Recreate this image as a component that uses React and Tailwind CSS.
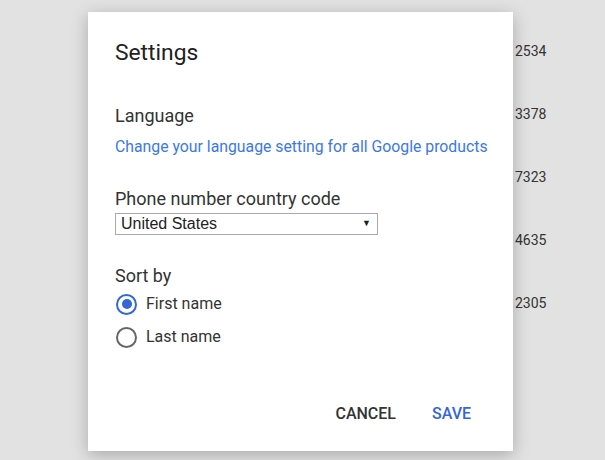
import React from "react";

export default function App() {
  const nums = ["2534", "3378", "7323", "4635", "2305"];
  return (
    <div className="relative w-[605px] h-[460px] overflow-hidden bg-[#e2e2e2]" style={{ fontFamily: "Roboto, 'Liberation Sans', sans-serif" }}>
      <div className="flex flex-col pl-[515px] pt-[41px] gap-[43px] text-[14px] leading-[20px] text-[#333]">
        {nums.map((n) => (
          <div key={n}>{n}</div>
        ))}
      </div>
      <div className="absolute left-[88px] top-[12px] w-[425px] h-[439px] bg-white shadow-[0_4px_16px_rgba(0,0,0,0.25)] flex flex-col pl-[27px]">
        <div className="mt-[29px] text-[22.8px] leading-[24px] text-[#212121]">Settings</div>
        <div className="mt-[41px] text-[18px] leading-[20px] text-[#333]">Language</div>
        <div className="mt-[11px] text-[15.8px] leading-[20px] text-[#3b78e7]">Change your language setting for all Google products</div>
        <div className="mt-[32px] text-[18px] leading-[20px] text-[#333]">Phone number country code</div>
        <div className="mt-[4px] w-[263px] h-[22px] border border-[#a9a9a9] flex items-center justify-between pl-[5px] pr-[6px] text-[16px] text-[#222]" style={{ fontFamily: "'Liberation Sans', Arial, sans-serif" }}>
          <span>United States</span>
          <span className="text-[9px]">▼</span>
        </div>
        <div className="mt-[31px] text-[18px] leading-[20px] text-[#333]">Sort by</div>
        <div className="mt-[7px] flex items-center h-[22px]">
          <span className="w-[21px] h-[21px] rounded-full border-[2.5px] border-[#3367d6] flex items-center justify-center ml-[1px]">
            <span className="w-[10px] h-[10px] rounded-full bg-[#3367d6]"></span>
          </span>
          <span className="ml-[9px] text-[16px] text-[#333]">First name</span>
        </div>
        <div className="mt-[11px] flex items-center h-[22px]">
          <span className="w-[21px] h-[21px] rounded-full border-[2.5px] border-[#666] ml-[1px]"></span>
          <span className="ml-[9px] text-[16px] text-[#333]">Last name</span>
        </div>
        <div className="mt-[56px] flex justify-end pr-[42px] gap-[36px] text-[16px] font-medium leading-[20px]">
          <span className="text-[#333]">CANCEL</span>
          <span className="text-[#3367d6]">SAVE</span>
        </div>
      </div>
    </div>
  );
}
